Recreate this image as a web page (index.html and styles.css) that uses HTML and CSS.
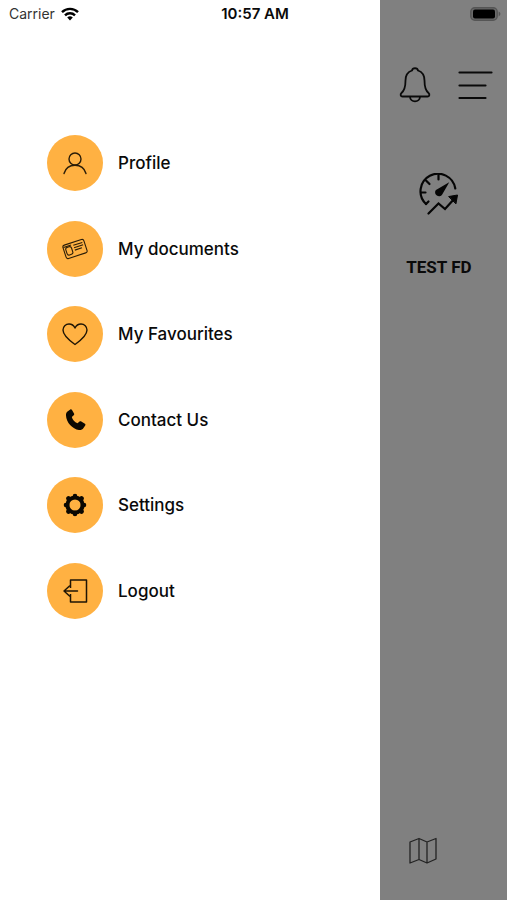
FILE: index.html
```html
<!DOCTYPE html>
<html lang="en">

<head>
    <meta charset="UTF-8">
    <meta name="viewport" content="width=device-width, initial-scale=1.0">
    <title>Menu</title>
    <link rel="stylesheet" href="styles.css">
</head>
<body>
    <header class="status-bar">
        <div class="carrier">
            <span>Carrier</span>
            <svg width="18" height="14" viewBox="0 0 18 14" fill="none" stroke="#000" stroke-width="2.4">
                <path d="M1 5.2a11.3 11.3 0 0 1 16 0"/>
                <path d="M4 8.4a7 7 0 0 1 10 0"/>
                <path d="M9 13.4 6.2 10.5a4 4 0 0 1 5.6 0z" fill="#000" stroke="none"/>
            </svg>
        </div>
        <time class="time">10:57 AM</time>
        <svg class="battery" width="31" height="14" viewBox="0 0 31 14">
            <rect x="0.8" y="0.8" width="26.4" height="12.4" rx="4" fill="#6a6a6a" stroke="#555" stroke-width="1.4"/>
            <rect x="3" y="2.6" width="22" height="8.8" rx="2" fill="#000"/>
            <path d="M28.6 4.6c2.4.9 2.4 3.9 0 4.8z" fill="#555"/>
        </svg>
    </header>

    <div class="screen">
        <nav class="drawer">
            <ul class="menu">
                <li>
                    <a href="#profile" class="menu-item">
                        <span class="circle">
                            <svg width="26" height="26" viewBox="0 0 26 26" fill="none" stroke="#2b1d08" stroke-width="1.4" stroke-linecap="round">
                                <circle cx="13" cy="9" r="6"/>
                                <path d="M2 23.5c1.4-5 5.6-8.300 11-8.300s9.600 3.300 11 8.300"/>
                            </svg>
                        </span>
                        <span>Profile</span>
                    </a>
                </li>
                <li>
                    <a href="#documents" class="menu-item">
                        <span class="circle">
                            <svg width="26" height="26" viewBox="0 0 26 26" fill="none" stroke="#2b1d08" stroke-width="1.1">
                                <g transform="rotate(-18 13 13)">
                                    <rect x="2" y="6" width="22" height="14" rx="2"/>
                                    <rect x="4" y="9" width="6" height="8" rx="2"/>
                                    <path d="M2.5 8h8M12.5 9H22M12.5 11.5H22M12.5 14H20"/>
                                </g>
                            </svg>
                        </span>
                        <span>My documents</span>
                    </a>
                </li>
                <li>
                    <a href="#favourites" class="menu-item">
                        <span class="circle">
                            <svg width="26" height="26" viewBox="0 0 26 26" fill="none" stroke="#1f1505" stroke-width="1.4" stroke-linejoin="round">
                                <path d="M13 23.5C6 18.5 1 14.2 1 9c0-3.5 2.7-6 6-6 2.7 0 4.8 1.4 6 4 1.2-2.6 3.3-4 6-4 3.3 0 6 2.5 6 6 0 5.2-5 9.5-12 14.5z"/>
                            </svg>
                        </span>
                        <span>My Favourites</span>
                    </a>
                </li>
                <li>
                    <a href="#contact" class="menu-item">
                        <span class="circle">
                            <svg width="26" height="26" viewBox="0 0 26 26" fill="#0b0802">
                                <path d="M5.5 4.5 8.3 2.5c.6-.4 1.3-.2 1.7.4l2 3.5c.4.7.2 1.3-.3 1.8L9.800 10c.7 2.9 2.9 5.2 5.7 6.2l2-1.6c.5-.4 1.2-.5 1.8-.1l3.6 2.2c.6.4.7 1.1.3 1.7l-1.7 2.6c-1 1.6-2.7 2.2-4.5 2C10.5 22 4.2 15.5 4 8.5c-.1-1.6.3-3 1.5-4z"/>
                            </svg>
                        </span>
                        <span>Contact Us</span>
                    </a>
                </li>
                <li>
                    <a href="#settings" class="menu-item">
                        <span class="circle">
                            <svg width="26" height="26" viewBox="0 0 26 26" fill="none" stroke="#0b0802">
                                <circle cx="13" cy="13" r="7.6" stroke-width="4"/>
                                <path d="M13 5V4M13 21v1M5 13H4M21 13h1M7 7l-.5-.5M19 19l.5.5M7 19l-.5.5M19 7l.5-.5" stroke-width="4.600" stroke-linecap="round"/>
                            </svg>
                        </span>
                        <span>Settings</span>
                    </a>
                </li>
                <li>
                    <a href="#logout" class="menu-item">
                        <span class="circle">
                            <svg width="26" height="26" viewBox="0 0 26 26" fill="none" stroke="#1f1505" stroke-width="1.5" stroke-linejoin="round">
                                <path d="M8.5 10V2h16v22h-16v-8"/>
                                <path d="M15.5 13H2M7.5 8 2 13l5.5 5" stroke-linecap="round"/>
                            </svg>
                        </span>
                        <span>Logout</span>
                    </a>
                </li>
            </ul>
        </nav>

        <main class="page">
            <div class="toolbar">
                <button class="icon-button" type="button" aria-label="Notifications">
                    <svg width="32" height="36" viewBox="0 0 32 36" fill="none" stroke="#0a0a0a" stroke-width="1.8" stroke-linejoin="round">
                        <path d="M13 3.5c.5-3 5.5-3 6 0 4.5 1.5 6.5 5.5 6.5 10 0 7 1 10 4 12.5 1.5 1.5 1 3.5-1 3.5h-25c-2 0-2.5-2-1-3.5 3-2.5 4-5.5 4-12.5 0-4.5 2-8.5 6.5-10z"/>
                        <path d="M11 29.5c0 6.5 10 6.5 10 0"/>
                    </svg>
                </button>
                <button class="icon-button" type="button" aria-label="Menu">
                    <svg width="35" height="30" viewBox="0 0 35 30" fill="none" stroke="#0a0a0a" stroke-width="2.2" stroke-linecap="round">
                        <path d="M1.5 2.5h32M1.5 15.5h26M1.5 28h26"/>
                    </svg>
                </button>
            </div>
            <a href="#test-fd" class="tile">
                <svg width="40" height="42" viewBox="0 0 40 42" fill="none" stroke="#050505" stroke-width="2.2" stroke-linecap="round">
                    <path d="M7 31A17.5 17.5 0 1 1 36.3 15.5"/>
                    <path d="M19.5 2v4.5M2 19.5h4.5M7 7.5l3.5 3.5M7 31l2.5-2.5"/>
                    <path d="M28 11.5 22.5 21c-2 3.5-7.5 0-5-3.5z" fill="#050505" stroke-width="1.6"/>
                    <path d="M9.500 40.5 19.5 30.5l6.5 5.5L36 25"/>
                    <path d="M30 23.5l8.5-1.5-1.5 8.5z" fill="#050505" stroke-width="1"/>
                </svg>
                <span>TEST FD</span>
            </a>
            <a href="#map" class="map-link" aria-label="Map">
                <svg width="28" height="28" viewBox="0 0 28 28" fill="none" stroke="#222" stroke-width="1.3" stroke-linejoin="round">
                    <path d="M1 5l9-3.5 8 3.5 9-3.5V22l-9 4-8-3.5L1 26zM10 1.5v21M18 5v21"/>
                </svg>
            </a>
        </main>
    </div>
</body>
</html>
```
FILE: styles.css
```css
* {
    box-sizing: border-box;
}

body {
    margin: 0;
    background-color: #fff;
    color: #0a0a0a;
    font-family: Inter, "Liberation Sans", sans-serif;
}

a {
    color: inherit;
    text-decoration: none;
}

svg {
    display: block;
}

/* sits over both the drawer and the page */
.status-bar {
    position: absolute;
    top: 0;
    left: 0;
    right: 0;
    display: grid;
    grid-template-columns: 1fr auto 1fr;
    align-items: center;
    height: 27px;
    padding: 0 6px 0 9px;
    font-size: 14px;
}

.carrier {
    display: flex;
    align-items: center;
    gap: 6px;
    color: #333;
}

.time {
    font-size: 15px;
    font-weight: 600;
}

.battery {
    justify-self: end;
}

.screen {
    display: flex;
    min-height: 100vh;
}

.drawer {
    width: 75%;
    padding: 135px 20px 40px 47px;
    background-color: #fff;
}

.menu {
    display: flex;
    flex-direction: column;
    justify-content: space-between;
    min-height: 484px;
    margin: 0;
    padding: 0;
    list-style: none;
}

.menu-item {
    display: flex;
    align-items: center;
    gap: 15px;
    font-size: 17px;
    font-weight: 500;
}

.circle {
    display: flex;
    justify-content: center;
    align-items: center;
    width: 56px;
    height: 56px;
    border-radius: 50%;
    background-color: #ffb142;
}

.page {
    flex: 1;
    display: flex;
    flex-direction: column;
    align-items: flex-start;
    padding: 67px 14px 35px 19px;
    background-color: #808080;
}

.toolbar {
    display: flex;
    justify-content: space-between;
    align-items: center;
    align-self: stretch;
}

.icon-button {
    padding: 0;
    border: none;
    background: none;
    cursor: pointer;
}

.tile {
    display: flex;
    flex-direction: column;
    align-items: center;
    gap: 42px;
    margin-top: 70px;
    margin-left: 7px;
    font-family: Roboto, "Liberation Sans", sans-serif;
    font-size: 17px;
    font-weight: 700;
}

.map-link {
    margin-top: auto;
    margin-left: 10px;
}
```
